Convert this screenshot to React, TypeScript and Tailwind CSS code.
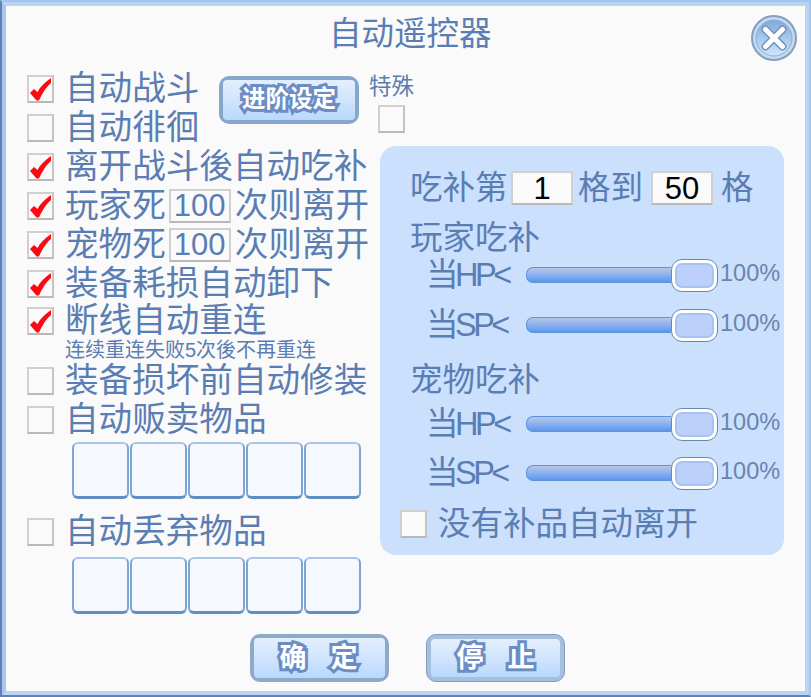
function Check({ on = false }: { on?: boolean }) {
  return (
    <div className="w-[27px] h-[28px] shrink-0 border-2 border-[#d0d0d0] border-b-[#b9b9b9] border-r-[#c4c4c4] bg-[#fafafa] flex items-center justify-center">
      {on && (
        <svg width="23" height="24" viewBox="0 0 23 24">
          <path d="M1 16 L5 12 L8.5 15 C11 10 16 5 22 1 L22 6 C17 10 13 17 10 23.5 L7.5 23.5 Z" fill="#fb0a12" />
        </svg>
      )}
    </div>
  );
}

function Row({ on, text, h = "h-[39px]" }: { on?: boolean; text: string; h?: string }) {
  return (
    <div className={`flex items-center ${h}`}>
      <Check on={on} />
      <span className="ml-[11px] whitespace-nowrap text-[33.6px]">{text}</span>
    </div>
  );
}

function NumBox({ value, dark }: { value: string; dark?: boolean }) {
  return (
    <div
      className={`w-[62px] h-[34px] shrink-0 border-2 border-[#d0d0d0] border-b-[#b9b9b9] flex items-center justify-center text-[31px] leading-none ${
        dark ? "bg-[#fafafa] text-black" : ""
      }`}
    >
      {value}
    </div>
  );
}

function CountRow({ text }: { text: string }) {
  return (
    <div className="flex items-center h-[39px]">
      <Check on />
      <span className="ml-[11px] w-[104px] whitespace-nowrap text-[33.6px]">{text}</span>
      <NumBox value="100" />
      <span className="ml-[4px] whitespace-nowrap text-[33.6px]">次则离开</span>
    </div>
  );
}

function Slots() {
  return (
    <div className="flex gap-px ml-[45px]">
      {[0, 1, 2, 3, 4].map((i) => (
        <div
          key={i}
          className="w-[57px] h-[57px] rounded-[6px] bg-[#f5f9ff] border-2 border-[#a9c6e8] border-b-[3px] border-b-[#5f8fc2] border-l-[#7ea6d2] border-r-[#7ea6d2]"
        />
      ))}
    </div>
  );
}

function Slider({ label, mt }: { label: string; mt: string }) {
  return (
    <div className={`flex items-center h-[38px] ${mt}`}>
      <span className="w-[146px] pl-[46px] whitespace-nowrap tracking-[-3.5px]">{label}</span>
      <div className="w-[145px] h-[16px] rounded-l-[7px] border border-r-0 border-[#5c93dc] bg-gradient-to-b from-[#b9c6e2] via-[#8bb0f2] to-[#5a98ea]" />
      <div className="w-[47px] h-[33px] rounded-[11px] border border-[#6d86b0] bg-white p-[3px]">
        <div className="w-full h-full rounded-[7px] border-2 border-[#a6c4f2] bg-[#bcd0fb]" />
      </div>
      <span className="ml-[2px] -mt-[2px] text-[23.5px] leading-none text-[#6b84ad]">100%</span>
    </div>
  );
}

function GameButton({ w, children, border }: { w: string; children: React.ReactNode; border: string }) {
  return (
    <div className={`${w} h-[48px] rounded-[10px] p-[4px] ${border}`}>
      <div className="w-full h-full rounded-[4px] bg-gradient-to-b from-[#e3effe] via-[#d3e6fd] via-45% to-[#b9d8fd] flex items-center justify-center font-bold text-white [-webkit-text-stroke:6px_#6c8dc3] [paint-order:stroke_fill] leading-none">
        {children}
      </div>
    </div>
  );
}

function CloseIcon() {
  return (
    <svg width="46" height="46" viewBox="0 0 46 46">
      <defs>
        <linearGradient id="closeFill" x1="0" y1="0" x2="0" y2="1">
          <stop offset="0" stopColor="#7fa9d8" />
          <stop offset="0.55" stopColor="#a9cbef" />
          <stop offset="1" stopColor="#cfe5fd" />
        </linearGradient>
      </defs>
      <circle cx="23" cy="23" r="22" fill="#c9d9ea" stroke="#7f9fc4" strokeWidth="2" />
      <circle cx="23" cy="23" r="18" fill="url(#closeFill)" stroke="#8caed4" strokeWidth="1" />
      <path d="M14.5 14.5 L31.5 31.5 M31.5 14.5 L14.5 31.5" stroke="#6f93c0" strokeWidth="8" strokeLinecap="round" />
      <path d="M14.5 14.5 L31.5 31.5 M31.5 14.5 L14.5 31.5" stroke="#ffffff" strokeWidth="5" strokeLinecap="round" />
    </svg>
  );
}

export default function App() {
  return (
    <div className="w-[811px] h-[697px] border-2 border-[#a5c6ec] border-l-[#5f82b5] border-b-[#5f82b5] text-[33px] leading-none text-[#5a7db3] font-['Liberation_Sans','Noto_Sans_CJK_SC',sans-serif] overflow-hidden">
      <div className="h-full border-[4px] border-[#b7d4f3] border-l-[#a9c8ee] bg-[#fafafa]">
        {/* title bar */}
        <div className="flex items-center justify-between h-[63px] pl-[323px] pr-[8px]">
          <span className="text-[32.5px] pb-[7px]">自动遥控器</span>
          <CloseIcon />
        </div>

        <div className="flex pl-[21px]">
          {/* left column */}
          <div className="w-[342px]">
            <div className="flex">
              <div className="w-[192px]">
                <Row on text="自动战斗" />
                <Row text="自动徘徊" />
              </div>
              <div className="mt-[7px]">
                <GameButton w="w-[140px]" border="bg-[#86a6cb]">
                  <span className="text-[23.5px]">进阶设定</span>
                </GameButton>
              </div>
            </div>
            <Row on text="离开战斗後自动吃补" />
            <CountRow text="玩家死" />
            <CountRow text="宠物死" />
            <Row on text="装备耗损自动卸下" />
            <Row on text="断线自动重连" h="h-[36px]" />
            <div className="h-[22px] flex items-center pl-[38px] text-[20px] whitespace-nowrap">
              连续重连失败5次後不再重连
            </div>
            <Row text="装备损坏前自动修装" />
            <Row text="自动贩卖物品" />
            <div className="mt-[3px]">
              <Slots />
            </div>
            <div className="mt-[13px]">
              <Row text="自动丢弃物品" />
            </div>
            <div className="mt-[6px]">
              <Slots />
            </div>
          </div>

          {/* right column */}
          <div>
            <div className="h-[36px] flex items-center text-[22.5px]">特殊</div>
            <div className="ml-[9px]">
              <Check />
            </div>
            <div className="mt-[13px] ml-[11px] w-[404px] h-[409px] rounded-[16px] bg-[#cae0fd] pt-[25px] text-[32.5px]">
              <div className="flex items-center h-[34px] pl-[30px]">
                <span className="w-[101px] whitespace-nowrap">吃补第</span>
                <NumBox value="1" dark />
                <span className="ml-[5px] w-[73px] whitespace-nowrap">格到</span>
                <NumBox value="50" dark />
                <span className="ml-[8px]">格</span>
              </div>
              <div className="mt-[15px] h-[36px] flex items-center pl-[30px]">玩家吃补</div>
              <Slider label="当HP<" mt="mt-0" />
              <Slider label="当SP<" mt="mt-[12px]" />
              <div className="mt-[18px] h-[36px] flex items-center pl-[30px]">宠物吃补</div>
              <Slider label="当HP<" mt="mt-[7px]" />
              <Slider label="当SP<" mt="mt-[11px]" />
              <div className="mt-[14px] h-[36px] flex items-center pl-[20px]">
                <Check />
                <span className="ml-[11px] whitespace-nowrap">没有补品自动离开</span>
              </div>
            </div>
          </div>
        </div>

        {/* bottom buttons */}
        <div className="flex gap-[37px] ml-[244px] mt-[20px]">
          <GameButton w="w-[139px]" border="bg-[#8ea9c9]">
            <span className="flex gap-[24px] text-[27px] -ml-[2px]">
              <span>确</span>
              <span>定</span>
            </span>
          </GameButton>
          <GameButton w="w-[139px]" border="bg-[#a5c0de] border border-[#7f9fc4]">
            <span className="flex gap-[24px] text-[27px]">
              <span>停</span>
              <span>止</span>
            </span>
          </GameButton>
        </div>
      </div>
    </div>
  );
}
